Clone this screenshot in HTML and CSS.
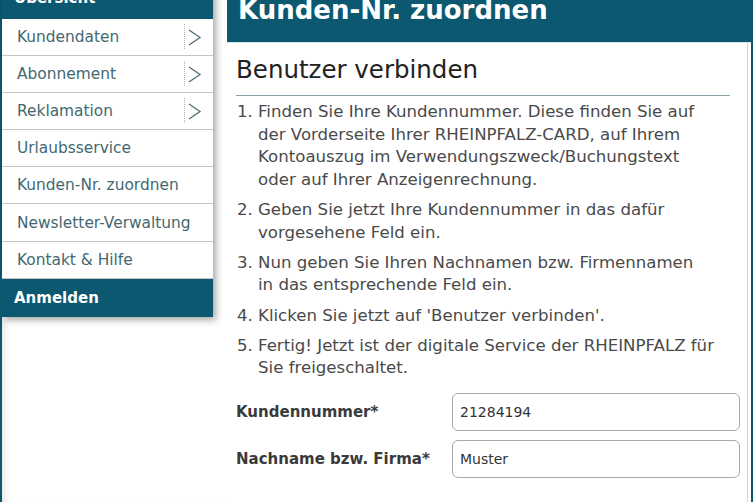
FILE: index.html
```html
<!DOCTYPE html>
<html lang="de">
<head>
    <meta charset="UTF-8">
    <meta name="viewport" content="width=device-width, initial-scale=1.0">
    <title>Kunden-Nr. zuordnen</title>
    <link rel="stylesheet" href="styles.css">
</head>
<body>
    <div class="page">
        <!-- Sidebar with the opened account menu -->
        <aside class="sidebar">
            <nav class="menu">
                <div class="menu-title">Übersicht</div>
                <a class="menu-item" href="#">
                    <span class="menu-label">Kundendaten</span>
                    <span class="menu-arrow"><svg width="14" height="18" viewBox="0 0 14 18"><polyline points="1,2 12,9.5 1,17" /></svg></span>
                </a>
                <a class="menu-item" href="#">
                    <span class="menu-label">Abonnement</span>
                    <span class="menu-arrow"><svg width="14" height="18" viewBox="0 0 14 18"><polyline points="1,2 12,9.5 1,17" /></svg></span>
                </a>
                <a class="menu-item" href="#">
                    <span class="menu-label">Reklamation</span>
                    <span class="menu-arrow"><svg width="14" height="18" viewBox="0 0 14 18"><polyline points="1,2 12,9.5 1,17" /></svg></span>
                </a>
                <a class="menu-item" href="#"><span class="menu-label">Urlaubsservice</span></a>
                <a class="menu-item" href="#"><span class="menu-label">Kunden-Nr. zuordnen</span></a>
                <a class="menu-item" href="#"><span class="menu-label">Newsletter-Verwaltung</span></a>
                <a class="menu-item" href="#"><span class="menu-label">Kontakt &amp; Hilfe</span></a>
                <a class="menu-login" href="#">Anmelden</a>
            </nav>
        </aside>

        <main class="main">
            <header class="main-header">
                <h1>Kunden-Nr. zuordnen</h1>
            </header>

            <div class="content">
                <h2>Benutzer verbinden</h2>

                <ol class="steps">
                    <li>Finden Sie Ihre Kundennummer. Diese finden Sie auf<br>der Vorderseite Ihrer RHEINPFALZ-CARD, auf Ihrem<br>Kontoauszug im Verwendungszweck/Buchungstext<br>oder auf Ihrer Anzeigenrechnung.</li>
                    <li>Geben Sie jetzt Ihre Kundennummer in das dafür<br>vorgesehene Feld ein.</li>
                    <li>Nun geben Sie Ihren Nachnamen bzw. Firmennamen<br>in das entsprechende Feld ein.</li>
                    <li>Klicken Sie jetzt auf 'Benutzer verbinden'.</li>
                    <li>Fertig! Jetzt ist der digitale Service der RHEINPFALZ für<br>Sie freigeschaltet.</li>
                </ol>

                <form class="connect-form">
                    <div class="field">
                        <label for="customerNo">Kundennummer*</label>
                        <input type="text" id="customerNo" value="21284194">
                    </div>
                    <div class="field">
                        <label for="lastName">Nachname bzw. Firma*</label>
                        <input type="text" id="lastName" value="Muster">
                    </div>
                </form>
            </div>
        </main>
    </div>
</body>
</html>
```

FILE: styles.css
```css
body {
    margin: 0;
    font-family: "DejaVu Sans", Verdana, sans-serif;
    background: #fff;
    overflow: hidden;
}
.page {
    display: flex;
    margin-top: -21px;
    height: calc(100vh + 21px);
    border-left: 2px solid #0b5870;
    border-right: 2px solid #0b5870;
}

/* sidebar + menu */
.sidebar {
    width: 225px;
    flex-shrink: 0;
    box-shadow: inset 8px 0 8px -6px rgba(0,0,0,0.12);
}
.menu {
    width: 211px;
    background: #fff;
    box-shadow: 3px 3px 7px rgba(0,0,0,0.35);
    position: relative;
    z-index: 2;
}
.menu-title {
    height: 39.5px;
    line-height: 39px;
    padding-left: 12px;
    background: #0b5870;
    color: #fff;
    font-weight: bold;
    font-size: 15px;
}
.menu-item {
    display: flex;
    align-items: center;
    height: 36.2px;
    border-bottom: 1px solid #c4c4c4;
    text-decoration: none;
    color: #436870;
    font-size: 15.4px;
}
.menu-label {
    flex: 1;
    padding-left: 15px;
}
.menu-arrow {
    display: flex;
    align-items: center;
    height: 25px;
    width: 29px;
    padding-left: 3px;
    border-left: 1px dotted #b0b0b0;
    box-sizing: border-box;
}
.menu-arrow polyline {
    fill: none;
    stroke: #4d6c73;
    stroke-width: 1.3;
}
.menu-login {
    display: block;
    height: 38px;
    line-height: 38px;
    margin-left: -2px;
    padding-left: 14px;
    background: #0b5870;
    color: #fff;
    font-weight: bold;
    font-size: 15px;
    text-decoration: none;
}

/* main column */
.main {
    flex: 1;
    display: flex;
    flex-direction: column;
}
.main-header {
    height: 63px;
    flex-shrink: 0;
    background: #0b5870;
    border-bottom: 1px solid #cfe7eb;
}
.main-header h1 {
    margin: 0;
    padding-left: 11px;
    line-height: 63px;
    color: #fff;
    font-size: 26px;
    font-weight: bold;
}
.content {
    flex: 1;
    margin-right: 3px;
    padding: 0 7px 0 9px;
    border-right: 1px solid #d6d6d6;
}
.content h2 {
    margin: 13px 10px 0 0;
    padding-bottom: 11px;
    border-bottom: 1px solid #86a2a7;
    font-size: 24.5px;
    font-weight: normal;
    line-height: 28px;
    color: #222;
}
.steps {
    margin: 5px 0 0 0;
    padding-left: 22px;
    font-size: 16.6px;
    line-height: 22.6px;
    color: #4a4a4a;
}
.steps li {
    margin-bottom: 7.6px;
    white-space: nowrap;
}
.connect-form {
    margin-top: 13px;
}
.field {
    display: flex;
    align-items: center;
    margin-bottom: 9px;
}
.field label {
    width: 216px;
    font-weight: bold;
    font-size: 15px;
    color: #3a3a3a;
}
.field input {
    flex: 1;
    height: 38px;
    box-sizing: border-box;
    padding: 0 7px;
    border: 1px solid #a9a9a9;
    border-radius: 6px;
    font-family: "DejaVu Sans", Verdana, sans-serif;
    font-size: 14px;
    color: #333;
}
```
